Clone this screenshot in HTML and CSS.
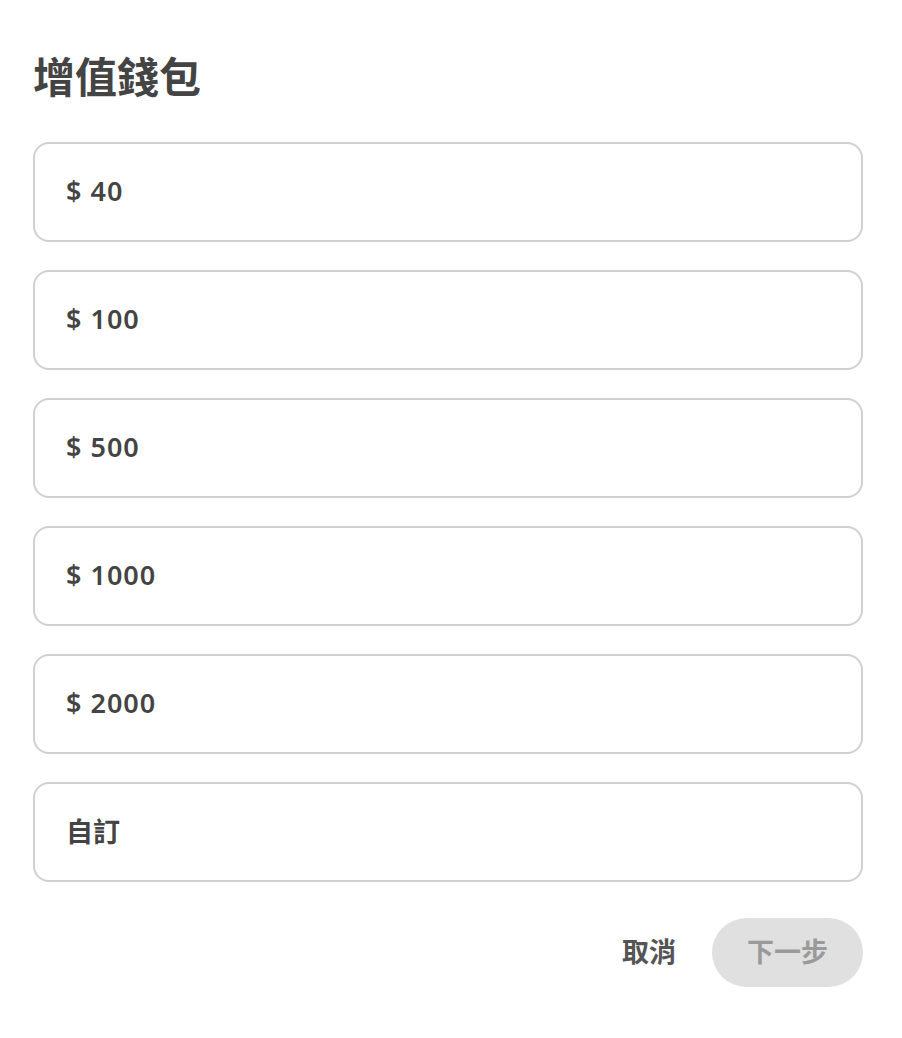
FILE: index.html
```html
<!DOCTYPE html>
<html lang="zh-Hant">
<head>
<meta charset="utf-8">
<title>增值錢包</title>
<link rel="stylesheet" href="styles.css">
</head>
<body>
<main class="dialog">
  <h1 class="title">增值錢包</h1>
  <ul class="options">
    <li class="option">$ 40</li>
    <li class="option">$ 100</li>
    <li class="option">$ 500</li>
    <li class="option">$ 1000</li>
    <li class="option">$ 2000</li>
    <li class="option option-cjk">自訂</li>
  </ul>
  <div class="actions">
    <button class="btn-text">取消</button>
    <button class="btn-next" disabled>下一步</button>
  </div>
</main>
</body>
</html>
```
FILE: styles.css
```css
* { box-sizing: border-box; }
html, body { margin: 0; padding: 0; background: #fff; }
body {
  font-family: "Noto Sans", "Noto Sans CJK TC", sans-serif;
  color: #444;
}
.dialog {
  width: 830px;
  margin-left: 33px;
  padding-top: 49px;
}
.title {
  margin: 0;
  font-size: 42px;
  line-height: 56px;
  font-weight: 700;
  color: #444;
}
.options {
  list-style: none;
  margin: 37px 0 0;
  padding: 0;
  display: flex;
  flex-direction: column;
  gap: 28px;
}
.option {
  height: 100px;
  border: 2px solid #d0d0d0;
  border-radius: 16px;
  padding: 0 0 4px 31px;
  display: flex;
  align-items: center;
  font-size: 27px;
  font-weight: 600;
  letter-spacing: 1px;
  color: #444;
}
.option-cjk {
  letter-spacing: 0;
}
.actions {
  margin-top: 36px;
  display: flex;
  justify-content: flex-end;
  align-items: center;
  gap: 36px;
}
.btn-text {
  border: 0;
  background: none;
  font-family: inherit;
  font-size: 27px;
  font-weight: 700;
  color: #555;
  padding: 0 0 4px;
}
.btn-next {
  border: 0;
  width: 151px;
  height: 69px;
  border-radius: 35px;
  background: #e0e0e0;
  font-family: inherit;
  font-size: 27px;
  font-weight: 700;
  color: #9a9a9a;
  padding: 0 0 4px;
}
```
